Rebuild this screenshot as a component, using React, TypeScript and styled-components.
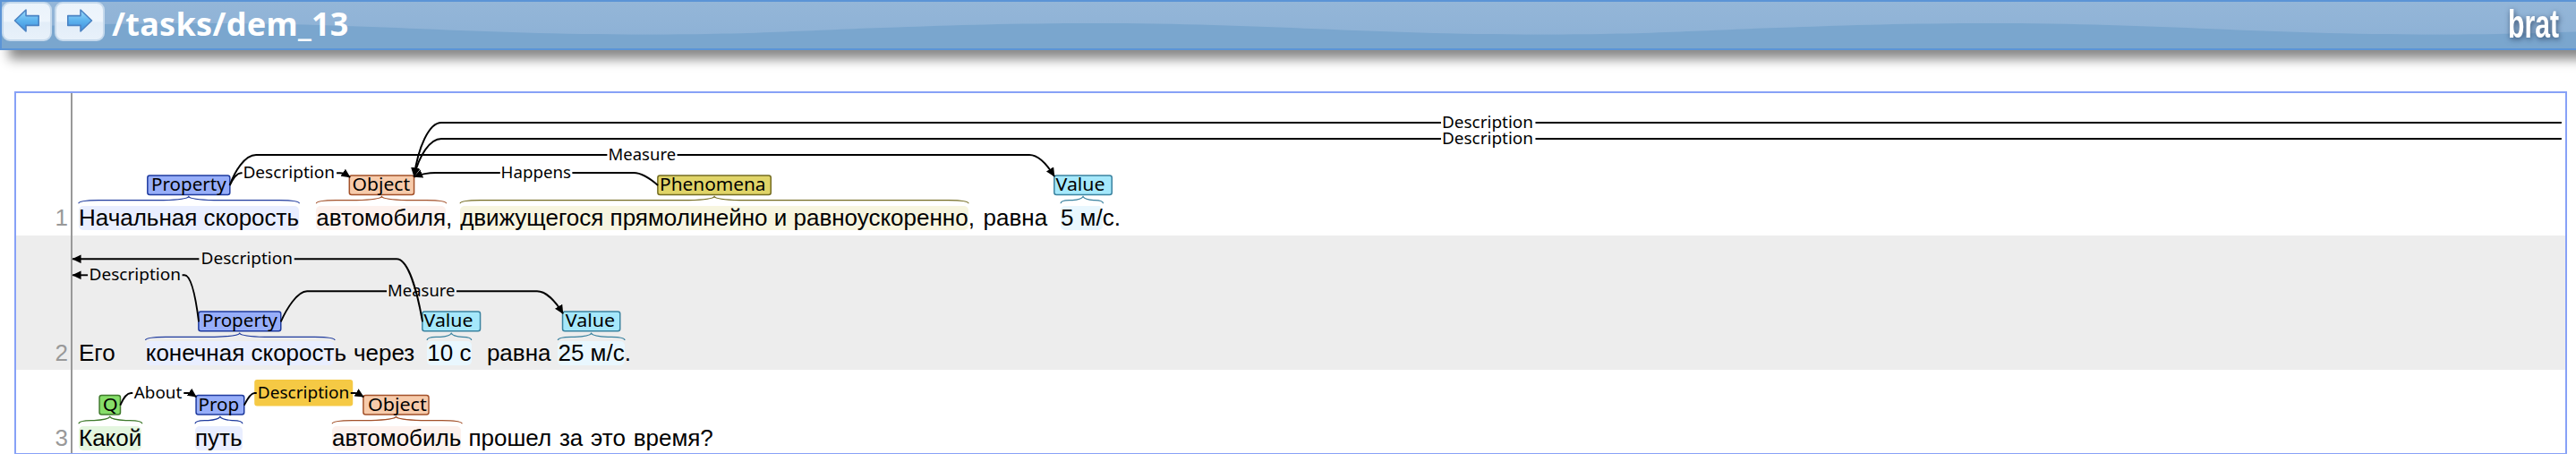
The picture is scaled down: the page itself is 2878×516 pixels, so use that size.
import React from 'react';
import styled, { createGlobalStyle } from 'styled-components';

const GlobalStyle = createGlobalStyle`
  html, body { margin: 0; padding: 0; background: #fff; overflow: hidden; }
  * { box-sizing: border-box; }
`;

const LABEL_FONT = '"Noto Sans", "Open Sans", sans-serif';

const Page = styled.div`
  width: 2878px;
  height: 516px;
  overflow: hidden;
  display: flex;
  flex-direction: column;
  font-family: 'Liberation Sans', Arial, sans-serif;
`;

/* ---------- header ---------- */

const Header = styled.header`
  position: relative;
  flex: none;
  width: 2900px;
  height: 56px;
  display: flex;
  align-items: flex-start;
  border: 2px solid #5b94d6;
  box-shadow: 10px 10px 12px #888;
  background: #7aa6ce;
`;

const Wave = styled.svg`
  position: absolute;
  inset: 0;
  width: 100%;
  height: 100%;
`;

const NavButton = styled.button`
  position: relative;
  flex: none;
  width: 56px;
  height: 44px;
  margin: 0 3px 0 0;
  padding: 0 0 2px;
  display: flex;
  align-items: center;
  justify-content: center;
  border: 2px solid #c5d9ec;
  border-radius: 9px;
  background: linear-gradient(#ebf3fb 0%, #eef5fc 48%, #e2edf8 54%, #e8f1fa 100%);
`;

const DocumentName = styled.h1`
  position: relative;
  margin: 0 0 0 5px;
  font: bold 36px/50px ${LABEL_FONT};
  letter-spacing: 0.3px;
  color: #fff;
`;

const Logo = styled.svg`
  position: relative;
  margin-left: auto;
  margin-right: 34px;
  width: 64px;
  height: 50px;
  overflow: visible;
  filter: drop-shadow(1px 2px 3px rgba(30, 50, 80, 0.75));
`;

/* ---------- document ---------- */

const Document = styled.main`
  width: 2852px;
  height: 405px;
  margin: 46px 0 0 16px;
  display: flex;
  flex-direction: column;
  border: 2px solid #87a1f7;
  border-bottom-width: 1px;
`;

const SentenceRow = styled.section<{ $shaded?: boolean; $height: number }>`
  flex: none;
  display: flex;
  height: ${(p) => p.$height}px;
  background: ${(p) => (p.$shaded ? '#ededed' : '#fff')};
`;

const Gutter = styled.div<{ $bottom: number }>`
  flex: none;
  width: 63px;
  padding: 0 3px ${(p) => p.$bottom}px 0;
  display: flex;
  align-items: flex-end;
  justify-content: flex-end;
  border-right: 2px solid #999;
  font-size: 26px;
  line-height: 27px;
  color: #999;
`;

const Body = styled.div<{ $bottom: number }>`
  flex: 1;
  display: flex;
  flex-direction: column;
  justify-content: space-between;
  padding-bottom: ${(p) => p.$bottom}px;
`;

const Diagram = styled.svg`
  display: block;
  flex: none;
  width: 2785px;
  overflow: visible;
`;

const TextLine = styled.p`
  margin: 0;
  padding-left: 7px;
  display: flex;
  font-size: 26px;
  line-height: 27px;
  color: #000;
  white-space: pre;
`;

const Word = styled.span<{ $gap?: number; $mark?: string }>`
  margin-left: ${(p) => p.$gap ?? 0}px;
  height: 27px;
  border-radius: 5px;
  background: ${(p) => p.$mark ?? 'transparent'};
`;

/* ---------- annotation types ---------- */

const TYPES = {
  property: { fill: '#97aef9', stroke: '#1f3b9e', mark: '#e9eeff' },
  object: { fill: '#f7cbab', stroke: '#a3512a', mark: '#fdf1ed' },
  phenomena: { fill: '#e0d468', stroke: '#746c22', mark: '#f7f5df' },
  value: { fill: '#a5e8fb', stroke: '#3b83a0', mark: '#e9f7fe' },
  question: { fill: '#86de69', stroke: '#3f7a2c', mark: '#e4f6df' },
};
type Kind = keyof typeof TYPES;

interface TagSpec {
  kind: Kind;
  text: string;
  x: [number, number];
  tx: [number, number];
  span: [number, number];
}
interface ArcSpec {
  text: string;
  y: number;
  tx: [number, number];
  left: string;
  right: string;
  head: 'left' | 'right';
  active?: [number, number];
}
interface WordSpec {
  text: string;
  gap?: number;
  kind?: Kind;
}
interface SentenceSpec {
  no: number;
  top: number;
  height: number;
  bottom: number;
  tagY: number;
  braceY: number;
  tags: TagSpec[];
  arcs: ArcSpec[];
  words: WordSpec[];
}

const SENTENCES: SentenceSpec[] = [
  {
    no: 1, top: 104, height: 158.7, bottom: 5.7, tagY: 196, braceY: 227.3,
    tags: [
      { kind: 'property', text: 'Property', x: [164.7, 256.7], tx: [170, 252], span: [87.7, 334.3] },
      { kind: 'object', text: 'Object', x: [390.2, 462.5], tx: [394.5, 457.5], span: [353.3, 498.5] },
      { kind: 'phenomena', text: 'Phenomena', x: [734.8, 861.2], tx: [738, 855], span: [514, 1082] },
      { kind: 'value', text: 'Value', x: [1177.8, 1242.2], tx: [1180.5, 1234], span: [1185, 1232.5] },
    ],
    arcs: [
      { text: 'Description', y: 137, tx: [1611, 1713], left: 'M1610 137H493C479 137 467 165 462.5 197', right: 'M1715.5 137H2862', head: 'left' },
      { text: 'Description', y: 155, tx: [1611, 1713], left: 'M1610 155H493C480 155 468 174 462.5 197', right: 'M1715.5 155H2862', head: 'left' },
      { text: 'Measure', y: 173, tx: [679.5, 755], left: 'M678.3 173H286C273 173 262 192 256.5 207', right: 'M756.5 173H1150C1160 173 1170 184 1178 197', head: 'right' },
      { text: 'Description', y: 193, tx: [271.3, 374], left: 'M270.5 193.3H269C264 193.3 260 200 256.5 207', right: 'M376 193.3H380Q384 193.3 391 198', head: 'right' },
      { text: 'Happens', y: 193, tx: [559.5, 638], left: 'M558.7 193H487Q474 193 462.5 197.5', right: 'M639.3 193H708C717 193 727 200 735 207', head: 'left' },
    ],
    words: [
      { text: 'Начальная скорость', kind: 'property' },
      { text: 'автомобиля', gap: 19.3, kind: 'object' },
      { text: ',' },
      { text: 'движущегося прямолинейно и равноускоренно', gap: 8.8, kind: 'phenomena' },
      { text: ',' },
      { text: 'равна', gap: 9.7 },
      { text: '5 м/', gap: 14.8, kind: 'value' },
      { text: 'с.' },
    ],
  },
  {
    no: 2, top: 262.7, height: 150.6, bottom: 5, tagY: 347.8, braceY: 379.7,
    tags: [
      { kind: 'property', text: 'Property', x: [221.8, 313.7], tx: [227, 309.3], span: [162.5, 374] },
      { kind: 'value', text: 'Value', x: [471.8, 536.5], tx: [474.5, 528], span: [477, 526.7] },
      { kind: 'value', text: 'Value', x: [628.5, 692.7], tx: [632.8, 686.5], span: [623.3, 698] },
    ],
    arcs: [
      { text: 'Description', y: 289, tx: [224.5, 327], left: 'M222.3 289H81', right: 'M328.7 289H443C456 289 466 325 472 359', head: 'left' },
      { text: 'Description', y: 307, tx: [99.5, 202], left: 'M98 307H81', right: 'M203.5 307H206C214 307 219 335 222 359', head: 'left' },
      { text: 'Measure', y: 325, tx: [433, 508.5], left: 'M432 325H343C332 325 320 345 313.7 359', right: 'M510 325H600C610 325 621 337 629 350', head: 'right' },
    ],
    words: [
      { text: 'Его' },
      { text: 'конечная скорост', gap: 34, kind: 'property' },
      { text: 'ь' },
      { text: 'через', gap: 8 },
      { text: '10 с', gap: 14.1, kind: 'value' },
      { text: 'равна', gap: 17.4 },
      { text: '25 м/с', gap: 8, kind: 'value' },
      { text: '.' },
    ],
  },
  {
    no: 3, top: 413.3, height: 92.7, bottom: 2.9, tagY: 441.8, braceY: 473.5,
    tags: [
      { kind: 'question', text: 'Q', x: [110.8, 134.2], tx: [115.5, 131], span: [87.7, 158.5] },
      { kind: 'property', text: 'Prop', x: [218.8, 272.5], tx: [222.3, 266.5], span: [217.7, 270.7] },
      { kind: 'object', text: 'Object', x: [405.7, 478.8], tx: [411.7, 476], span: [371, 516] },
    ],
    arcs: [
      { text: 'About', y: 439.4, tx: [149.5, 203], left: 'M148 439.3H146C141 439.3 137 446 134 453', right: 'M205 439.3H210Q213 439.3 219 443.5', head: 'right' },
      { text: 'Description', y: 439.4, tx: [287.5, 390], left: 'M286.5 439.3H284C280 439.3 276 446 272.5 453', right: 'M391.5 439.3H396Q399 439.3 406 443.5', head: 'right', active: [284, 394] },
    ],
    words: [
      { text: 'Какой', kind: 'question' },
      { text: 'путь', gap: 59.7, kind: 'property' },
      { text: 'автомобиль', gap: 100.5, kind: 'object' },
      { text: 'прошел ', gap: 8.2 },
      { text: 'за ', gap: 1.6 },
      { text: 'это ', gap: 1.6 },
      { text: 'время?', gap: 1.6 },
    ],
  },
];

/* ---------- drawing parts ---------- */

const Label = styled.text<{ $size: number }>`
  font: ${(p) => p.$size}px ${LABEL_FONT};
  fill: #000;
`;

function brace([l, r]: [number, number], y: number, mid: number) {
  const k = Math.min(28, (r - l) / 4);
  return `M${l} ${y}Q${l} ${y - 3.4} ${l + k * 0.8} ${y - 3.6}H${mid - k}Q${mid - 2} ${y - 4.4} ${mid} ${y - 7.8}Q${mid + 2} ${y - 4.4} ${mid + k} ${y - 3.6}H${r - k * 0.8}Q${r} ${y - 3.4} ${r} ${y}`;
}

function Tag({ tag, y, braceY }: { tag: TagSpec; y: number; braceY: number }) {
  const c = TYPES[tag.kind];
  const [x1, x2] = tag.x;
  return (
    <g>
      <path d={brace(tag.span, braceY, (x1 + x2) / 2)} fill="none" stroke={c.stroke} strokeWidth={1.2} />
      <rect x={x1} y={y} width={x2 - x1} height={21.6} rx={2.5} fill={c.fill} stroke={c.stroke} strokeWidth={1.5} />
      <Label $size={20} x={tag.tx[0] - 1} y={y + 17.2} textLength={tag.tx[1] - tag.tx[0] + 1.5} lengthAdjust="spacingAndGlyphs">
        {tag.text}
      </Label>
    </g>
  );
}

function Arc({ arc }: { arc: ArcSpec }) {
  return (
    <g>
      {arc.active && (
        <rect x={arc.active[0]} y={arc.y - 15.2} width={arc.active[1] - arc.active[0]} height={29.5} rx={3} fill="#f5c944" />
      )}
      <path d={arc.left} fill="none" stroke="#000" strokeWidth={1.9} markerEnd={arc.head === 'left' ? 'url(#head)' : undefined} />
      <path d={arc.right} fill="none" stroke="#000" strokeWidth={1.9} markerEnd={arc.head === 'right' ? 'url(#head)' : undefined} />
      <Label $size={18} x={arc.tx[0]} y={arc.y + 5.8} textLength={arc.tx[1] - arc.tx[0]} lengthAdjust="spacingAndGlyphs">
        {arc.text}
      </Label>
    </g>
  );
}

function Sentence({ s }: { s: SentenceSpec }) {
  const h = s.height - 34;
  return (
    <SentenceRow $shaded={s.no % 2 === 0} $height={s.height}>
      <Gutter $bottom={s.bottom}>{s.no}</Gutter>
      <Body $bottom={s.bottom}>
        <Diagram viewBox={`81 ${s.top} 2785 ${h}`} height={h}>
          <defs>
            <marker id="head" markerUnits="userSpaceOnUse" markerWidth="12" markerHeight="12" refX="9.5" refY="5" orient="auto">
              <path d="M0 0.2L10 5L0 9.8Z" />
            </marker>
          </defs>
          {s.tags.map((t, i) => <Tag key={i} tag={t} y={s.tagY} braceY={s.braceY} />)}
          {s.arcs.map((a, i) => <Arc key={i} arc={a} />)}
        </Diagram>
        <TextLine>
          {s.words.map((w, i) => (
            <Word key={i} $gap={w.gap} $mark={w.kind && TYPES[w.kind].mark}>{w.text}</Word>
          ))}
        </TextLine>
      </Body>
    </SentenceRow>
  );
}

function ArrowIcon({ flip }: { flip?: boolean }) {
  return (
    <svg width="30" height="28" viewBox="0 0 30 28">
      <defs>
        <linearGradient id="arrow" x1="0" y1="0" x2="0" y2="1">
          <stop offset="0" stopColor="#9fdcfb" />
          <stop offset="0.5" stopColor="#5cb3ee" />
          <stop offset="1" stopColor="#3f8ddb" />
        </linearGradient>
      </defs>
      <path
        d="M1.5 14L14 2V8.6H28.2V19.4H14V26Z"
        transform={flip ? 'translate(30 0) scale(-1 1)' : undefined}
        fill="url(#arrow)" stroke="#4b83c3" strokeWidth="1.6" strokeLinejoin="round"
      />
    </svg>
  );
}

export default function App() {
  return (
    <Page>
      <GlobalStyle />
      <Header>
        <Wave>
          <defs>
            <linearGradient id="gloss" x1="0" y1="0" x2="0" y2="1">
              <stop offset="0" stopColor="#94b6d8" />
              <stop offset="1" stopColor="#8eb2d6" />
            </linearGradient>
            <pattern id="wave" width="1000" height="52" patternUnits="userSpaceOnUse">
              <path d="M0 0H1000V28.5C910 31 850 36.5 720 36.5C520 36.5 420 24 220 24C130 24 60 26.3 0 28.5Z" fill="url(#gloss)" />
            </pattern>
          </defs>
          <rect width="100%" height="52" fill="url(#wave)" />
        </Wave>
        <NavButton aria-label="Previous"><ArrowIcon /></NavButton>
        <NavButton aria-label="Next"><ArrowIcon flip /></NavButton>
        <DocumentName>/tasks/dem_13</DocumentName>
        <Logo viewBox="0 0 64 50">
          <text x="2" y="40" fontFamily="Liberation Sans, sans-serif" fontWeight="bold" fontSize="45" fill="#fff" textLength="57" lengthAdjust="spacingAndGlyphs">brat</text>
        </Logo>
      </Header>
      <Document>
        {SENTENCES.map((s) => <Sentence key={s.no} s={s} />)}
      </Document>
    </Page>
  );
}
